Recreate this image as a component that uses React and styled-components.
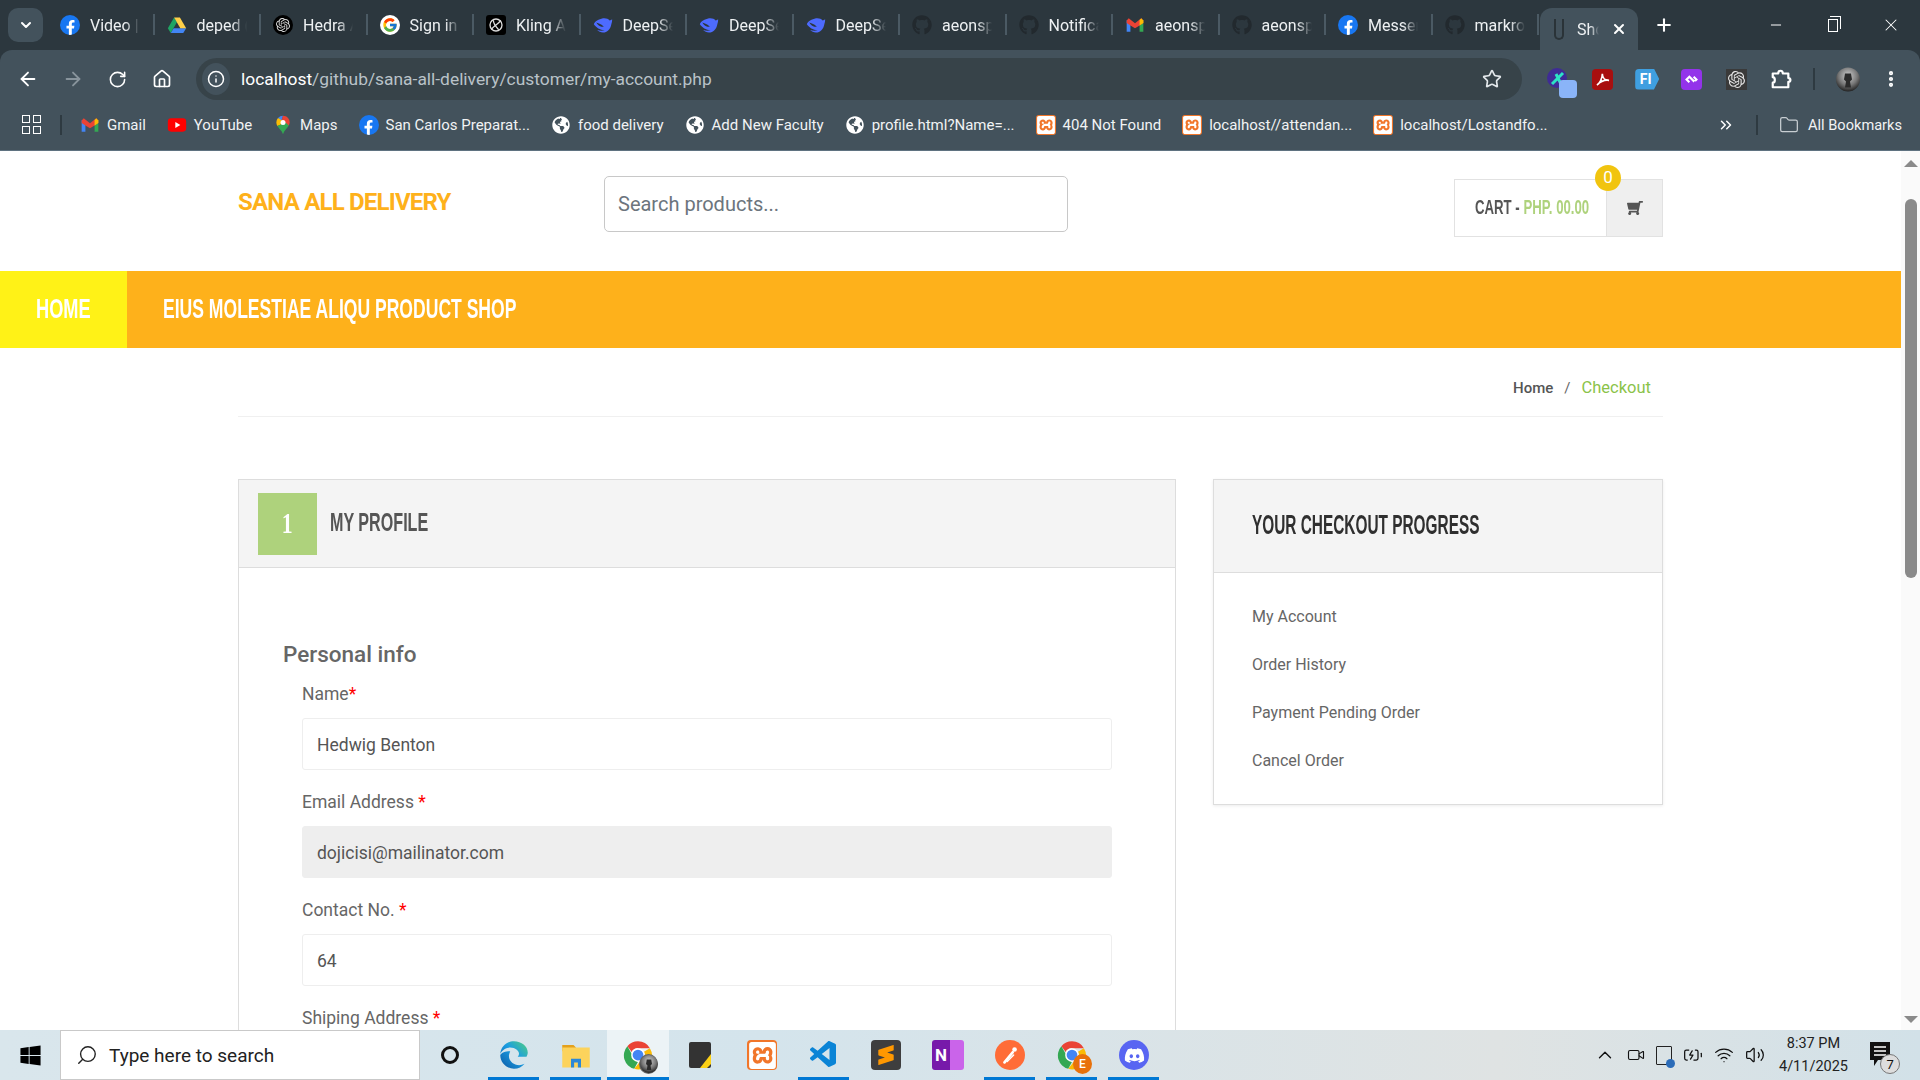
import styled, { createGlobalStyle } from "styled-components";
import {
  ArrowLeft,
  ArrowRight,
  BatteryCharging,
  ChevronDown,
  ChevronUp,
  ChevronsRight,
  EllipsisVertical,
  Folder,
  House,
  Info,
  Minus,
  Plus,
  RotateCw,
  Search,
  Star,
  Video,
  Volume2,
  Wifi,
  X,
} from "lucide-react";
import { FcGoogle } from "react-icons/fc";
import { FaDiscord, FaFacebookF, FaGithub, FaGlobeAmericas, FaShoppingCart, FaWindows } from "react-icons/fa";
import { SiOpenai, SiSublimetext, SiXampp } from "react-icons/si";
import { VscVscode } from "react-icons/vsc";

const GlobalStyle = createGlobalStyle`
  * {
    box-sizing: border-box;
  }

  html,
  body {
    margin: 0;
    height: 100%;
    overflow: hidden;
    background: #fff;
    font-family: Roboto, "Liberation Sans", sans-serif;
  }
`;

const Screen = styled.div`
  display: flex;
  flex-direction: column;
  width: 1920px;
  height: 1080px;
  overflow: hidden;
`;

const TabStrip = styled.div`
  display: flex;
  align-items: center;
  height: 50px;
  padding: 0 0 0 8px;
  background: #2c373e;
  color: #fff;
`;

const TabMenu = styled.div`
  display: flex;
  align-items: center;
  justify-content: center;
  flex: none;
  width: 35px;
  height: 34px;
  margin-right: 5px;
  border-radius: 10px;
  background: #43525c;
`;

const Tab = styled.div`
  position: relative;
  display: flex;
  align-items: center;
  flex: none;
  width: 106.5px;
  height: 50px;
  padding-left: 12px;

  &::after {
    content: "";
    position: absolute;
    right: 0;
    top: 14px;
    width: 2px;
    height: 21px;
    background: #4b5a64;
  }
`;

const TabIcon = styled.div`
  display: flex;
  align-items: center;
  justify-content: center;
  flex: none;
  width: 20px;
  height: 20px;
  margin-right: 10px;
`;

const TabLabel = styled.div`
  width: 50px;
  overflow: hidden;
  white-space: nowrap;
  font-size: 16px;
  color: #eef1f3;
  mask-image: linear-gradient(to right, #000 70%, transparent);
`;

const ActiveTab = styled.div`
  display: flex;
  align-items: center;
  flex: none;
  width: 98px;
  height: 42px;
  margin: 8px 0 0 1px;
  padding: 0 11px 0 14px;
  border-radius: 12px 12px 0 0;
  background: #43525c;
`;

const UploadGlyph = styled.div`
  flex: none;
  width: 10px;
  height: 21px;
  margin-right: 13px;
  border: 2px solid #2a3338;
  border-top: 0;
  border-radius: 0 0 6px 6px;
`;

const ActiveLabel = styled.div`
  width: 22px;
  margin-right: 12px;
  overflow: hidden;
  white-space: nowrap;
  font-size: 16px;
  color: #eef1f3;
  mask-image: linear-gradient(to right, #000 60%, transparent);
`;

const NewTab = styled.div`
  display: flex;
  margin-left: 16px;
`;

const WindowControls = styled.div`
  display: flex;
  align-items: center;
  justify-content: space-between;
  width: 133px;
  margin-left: auto;
  margin-right: 19px;
`;

const RestoreGlyph = styled.div`
  position: relative;
  width: 10px;
  height: 13px;
  border: 1.5px solid #fff;

  &::after {
    content: "";
    position: absolute;
    top: -4px;
    left: 1px;
    width: 10px;
    height: 12px;
    border: 1.5px solid #fff;
    border-left: 0;
    border-bottom: 0;
  }
`;

const ChromeTop = styled.div`
  background: #2c373e;
`;

const Toolbar = styled.div`
  display: flex;
  align-items: center;
  height: 50px;
  padding: 0 0 0 6px;
  border-radius: 12px 12px 0 0;
  background: #43525c;
  color: #fff;
`;

const NavButton = styled.div`
  display: flex;
  align-items: center;
  justify-content: center;
  flex: none;
  width: 44.5px;
  height: 42px;
  margin-top: 8px;
  color: ${(p) => (p.$off ? "#88949c" : "#fff")};
`;

const AddressBar = styled.div`
  display: flex;
  align-items: center;
  flex: none;
  width: 1326px;
  height: 42px;
  margin: 8px 0 0 12px;
  padding: 0 20px 0 6px;
  border-radius: 21px;
  background: #374349;
`;

const InfoDot = styled.div`
  display: flex;
  align-items: center;
  justify-content: center;
  flex: none;
  width: 28px;
  height: 32px;
  border-radius: 50%;
  background: #43525c;
`;

const Url = styled.div`
  flex: 1;
  margin-left: 11px;
  font-size: 17.4px;
  color: #fff;
`;

const UrlPath = styled.span`
  color: #b9c2c8;
`;

const Extensions = styled.div`
  display: flex;
  align-items: center;
  flex: 1;
  height: 42px;
  margin-top: 8px;
  padding-left: 24px;
`;

const ExtSlot = styled.div`
  display: flex;
  align-items: center;
  justify-content: center;
  flex: none;
  width: 24px;
  height: 24px;
  margin-right: 20.6px;
`;

const MenuSlot = styled.div`
  display: flex;
  margin-left: 1px;
`;

const OverlayBox = styled.div`
  position: relative;
  display: flex;
`;

const ExtSquare = styled.div`
  position: absolute;
  right: -8px;
  bottom: -8px;
  width: 18px;
  height: 18px;
  border-radius: 4px;
  background: #8ab4f8;
`;

const ExtTile = styled.div`
  display: flex;
  align-items: center;
  justify-content: center;
  flex: none;
  width: ${(p) => (p.$arrow ? "24px" : "21px")};
  height: 21px;
  padding-right: ${(p) => (p.$arrow ? "3px" : "0")};
  border-radius: ${(p) => (p.$square ? "0" : "4px")};
  background: ${(p) => p.$bg};
  clip-path: ${(p) => (p.$arrow ? "polygon(0 0, 78% 0, 100% 50%, 78% 100%, 0 100%)" : "none")};
`;

const ExtLetter = styled.span`
  font-size: 14px;
  font-weight: 700;
  color: #fff;
`;

const ToolbarDivider = styled.div`
  flex: none;
  width: 2px;
  height: 22px;
  margin: 0 21px 0 -1px;
  background: #2e3a41;
`;

const BookmarkBar = styled.div`
  display: flex;
  align-items: center;
  flex: none;
  height: 51px;
  padding: 0 0 1px 22px;
  background: #43525c;
  border-bottom: 1px solid #5f7280;
  color: #fff;
`;

const AppsGrid = styled.div`
  display: grid;
  grid-template-columns: 8px 8px;
  gap: 3px;
  flex: none;
  margin-right: 19px;
`;

const AppsCell = styled.div`
  width: 8px;
  height: 8px;
  border: 1.5px solid #fff;
`;

const BarDivider = styled.div`
  flex: none;
  width: 2px;
  height: 20px;
  background: #2e3a41;
`;

const BookmarkList = styled.div`
  display: flex;
  align-items: center;
  gap: 21px;
  margin-left: 18px;
`;

const Bookmark = styled.div`
  display: flex;
  align-items: center;
  gap: 7px;
  font-size: 15px;
  white-space: nowrap;
  color: #f1f3f4;
`;

const BookmarkIcon = styled.span`
  display: flex;
  align-items: center;
  justify-content: center;
  flex: none;
  width: 20px;
  height: 20px;
`;

const BookmarkEnd = styled.div`
  display: flex;
  align-items: center;
  gap: 21px;
  margin-left: auto;
  padding-right: 18px;
`;

const AllBookmarks = styled.div`
  display: flex;
  align-items: center;
  gap: 9px;
  font-size: 14.6px;
  color: #f1f3f4;
`;

const FacebookDisc = styled.div`
  display: flex;
  align-items: flex-end;
  justify-content: center;
  overflow: hidden;
  width: 20px;
  height: 20px;
  border-radius: 50%;
  background: #1877f2;
`;

const GoogleDisc = styled.div`
  display: flex;
  align-items: center;
  justify-content: center;
  width: 20px;
  height: 20px;
  border-radius: 50%;
  background: #fff;
`;

const HedraDisc = styled.div`
  display: flex;
  align-items: center;
  justify-content: center;
  width: 20px;
  height: 20px;
  border-radius: 50%;
  background: #000;
`;

const KlingBox = styled.div`
  display: flex;
  align-items: center;
  justify-content: center;
  width: 20px;
  height: 20px;
  border-radius: 3px;
  background: #000;
`;

const XamppTile = styled.div`
  display: flex;
  align-items: center;
  justify-content: center;
  width: 20px;
  height: 20px;
  border-radius: 3px;
  background: #f1762a;
`;

const Viewport = styled.div`
  display: flex;
  flex: 1;
  min-height: 0;
`;

const Page = styled.div`
  flex: 1;
  min-width: 0;
  overflow: hidden;
  background: #fff;
  color: #666;
`;

const Header = styled.header`
  display: flex;
  align-items: flex-start;
  width: 1425px;
  height: 120px;
  margin-left: 238px;
`;

const Logo = styled.div`
  flex: none;
  width: 366px;
  margin-top: 36px;
  font-size: 24px;
  line-height: 30px;
  font-weight: 700;
  letter-spacing: -0.8px;
  color: #feb11b;
`;

const SearchInput = styled.input`
  flex: none;
  width: 464px;
  height: 56px;
  margin-top: 25px;
  padding: 0 13px;
  border: 1px solid #c8c8c8;
  border-radius: 5px;
  outline: 0;
  font: 20px Roboto, sans-serif;
  color: #495057;

  &::placeholder {
    color: #6c757d;
    opacity: 1;
  }
`;

const Cart = styled.div`
  position: relative;
  display: flex;
  flex: none;
  width: 209px;
  height: 58px;
  margin: 28px 0 0 auto;
  border: 1px solid #e2e2e2;
`;

const CartTotal = styled.div`
  display: flex;
  align-items: center;
  flex: none;
  width: 152px;
  padding-left: 20px;
  border-right: 1px solid #e2e2e2;
  color: #555;
`;

const CartPrice = styled.span`
  color: #aed27c;
`;

const CartIcon = styled.div`
  display: flex;
  align-items: center;
  justify-content: center;
  flex: 1;
  background: #efefef;
`;

const CartGlyph = styled(FaShoppingCart)`
  transform: scaleX(-1);
`;

const CartBadge = styled.div`
  position: absolute;
  top: -15px;
  left: 140px;
  display: flex;
  align-items: center;
  justify-content: center;
  width: 26px;
  height: 26px;
  padding-bottom: 3px;
  border-radius: 50%;
  background: #f1c40f;
  font-size: 17px;
  color: #fff;
`;

const Condensed = styled.span`
  display: inline-block;
  flex: none;
  margin-top: -2px;
  font-family: "Liberation Sans", sans-serif;
  font-size: ${(p) => p.$size}px;
  font-weight: 700;
  white-space: nowrap;
  transform: scaleX(${(p) => p.$scale});
  transform-origin: left center;
`;

const NavBar = styled.nav`
  display: flex;
  align-items: stretch;
  height: 77px;
  background: #feb11b;
  color: #fff;
`;

const NavHome = styled.div`
  display: flex;
  align-items: center;
  flex: none;
  width: 127px;
  padding-left: 36px;
  background: #fff217;
`;

const NavTitle = styled.div`
  display: flex;
  align-items: center;
  flex: 1;
  padding-left: 36px;
`;

const Container = styled.div`
  width: 1425px;
  margin-left: 238px;
`;

const Breadcrumb = styled.div`
  display: flex;
  align-items: center;
  justify-content: flex-end;
  height: 69px;
  padding: 16px 12px 5px 0;
  border-bottom: 1px solid #f0f0f0;
  font-size: 16.5px;
`;

const CrumbLink = styled.span`
  font-weight: 500;
  font-size: 15px;
  color: #555;
`;

const CrumbSlash = styled.span`
  margin: 0 11px;
  font-size: 15px;
  color: #666;
`;

const CrumbCurrent = styled.span`
  color: #8bc34a;
`;

const Columns = styled.div`
  display: grid;
  grid-template-columns: 938px 450px;
  column-gap: 37px;
  align-items: start;
  margin-top: 62px;
`;

const Panel = styled.section`
  border: 1px solid #ddd;
`;

const ProfileHead = styled.div`
  display: flex;
  align-items: center;
  gap: 13px;
  height: 88px;
  padding-left: 19px;
  border-bottom: 1px solid #ddd;
  background: #f4f4f4;
  color: #555;
`;

const StepBadge = styled.div`
  display: flex;
  align-items: center;
  justify-content: center;
  flex: none;
  width: 59px;
  height: 62px;
  background: #aed27c;
  font-family: "Liberation Serif", serif;
  font-size: 29px;
  font-weight: 700;
  color: #fff;
`;

const StepDigit = styled.span`
  display: inline-block;
  transform: scaleX(0.75);
`;

const ProfileBody = styled.div`
  padding: 73px 63px 40px 44px;
`;

const SectionTitle = styled.h3`
  margin: 0 0 15px;
  font-size: 22.5px;
  line-height: 26px;
  font-weight: 500;
  color: #666;
`;

const Field = styled.div`
  margin: 0 0 20px 19px;
`;

const FieldLabel = styled.label`
  display: block;
  margin-bottom: 13px;
  padding-top: 1px;
  font-size: 17.5px;
  line-height: 22px;
  color: #666;
`;

const Required = styled.span`
  color: #f00;
`;

const FieldInput = styled.input`
  display: block;
  width: 100%;
  height: 52px;
  padding: 2px 14px 0;
  border: 1px solid #eee;
  border-radius: 3px;
  outline: 0;
  background: ${(p) => (p.$disabled ? "#eee" : "#fff")};
  font: 17.5px Roboto, sans-serif;
  color: #555;
`;

const Sidebar = styled.aside`
  border: 1px solid #ddd;
  box-shadow: 0 1px 3px rgba(0, 0, 0, 0.08);
`;

const SideHead = styled.div`
  display: flex;
  align-items: center;
  height: 93px;
  padding-left: 38px;
  border-bottom: 1px solid #ddd;
  background: #f4f4f4;
  color: #2f2f2f;
`;

const SideList = styled.ul`
  margin: 0;
  padding: 20px 0 19px 38px;
  list-style: none;
`;

const SideItem = styled.li`
  font-size: 16px;
  line-height: 48px;
  color: #666;
`;

const Scrollbar = styled.div`
  display: flex;
  flex-direction: column;
  align-items: center;
  flex: none;
  width: 19px;
  background: #fafafa;
`;

const ScrollArrow = styled.div`
  flex: none;
  width: 0;
  height: 0;
  margin: ${(p) => (p.$down ? "auto 0 7px" : "9px 0 0")};
  border-left: 7px solid transparent;
  border-right: 7px solid transparent;
  border-${(p) => (p.$down ? "top" : "bottom")}: 7px solid #8a8a8a;
`;

const ScrollThumb = styled.div`
  flex: none;
  width: 12px;
  height: 379px;
  margin-top: 32px;
  border-radius: 6px;
  background: #8a8a8a;
`;

const Taskbar = styled.footer`
  display: flex;
  align-items: center;
  flex: none;
  height: 50px;
  background: linear-gradient(90deg, #d9e6ec 0%, #d4e4ec 40%, #dfe3e3 78%, #d2e1e8 100%);
  color: #111;
`;

const StartButton = styled.div`
  display: flex;
  align-items: center;
  justify-content: center;
  flex: none;
  width: 60px;
  height: 50px;
`;

const TaskSearch = styled.div`
  display: flex;
  align-items: center;
  gap: 11px;
  flex: none;
  width: 360px;
  height: 50px;
  padding-left: 15px;
  border: 1px solid #c9c9c9;
  background: #fff;
  font-size: 19px;
  color: #222;
`;

const MirroredSearch = styled(Search)`
  transform: scaleX(-1);
`;

const CortanaSlot = styled.div`
  display: flex;
  align-items: center;
  justify-content: center;
  flex: none;
  width: 60px;
  height: 50px;
`;

const CortanaRing = styled.div`
  width: 18px;
  height: 18px;
  border: 3px solid #111;
  border-radius: 50%;
`;

const Dock = styled.div`
  display: flex;
  flex: none;
  margin-left: 3px;
`;

const DockItem = styled.div`
  position: relative;
  display: flex;
  align-items: center;
  justify-content: center;
  width: 62px;
  height: 50px;
  background: ${(p) => (p.$active ? "rgba(255, 255, 255, 0.55)" : "transparent")};

  &::after {
    content: "";
    display: ${(p) => (p.$running ? "block" : "none")};
    position: absolute;
    bottom: 0;
    left: ${(p) => (p.$active ? "0" : "5px")};
    right: ${(p) => (p.$active ? "0" : "6px")};
    height: 3px;
    background: #0078d4;
  }
`;

const ChromeBadge = styled.div`
  position: absolute;
  right: -5px;
  bottom: -4px;
  display: flex;
  align-items: center;
  justify-content: center;
  overflow: hidden;
  width: 19px;
  height: 20px;
  border-radius: 50%;
  background: ${(p) => p.$bg};
  font-size: 12px;
  font-weight: 500;
  color: #fff;
`;

const AppTile = styled.div`
  display: flex;
  align-items: center;
  justify-content: center;
  width: 30px;
  height: 30px;
  border-radius: ${(p) => (p.$round ? "50%" : "4px")};
  background: ${(p) => p.$bg};
`;

const OneNoteTile = styled.div`
  display: flex;
  align-items: center;
  width: 32px;
  height: 30px;
  border-radius: 3px;
  background: linear-gradient(90deg, #7719aa 55%, #ca64ea 55%);
`;

const OneNoteLetter = styled.span`
  width: 18px;
  text-align: center;
  font-size: 17px;
  font-weight: 700;
  color: #fff;
`;

const Tray = styled.div`
  display: flex;
  align-items: center;
  gap: 11px;
  margin-left: auto;
`;

const TrayMonitor = styled.div`
  position: relative;
  width: 16px;
  height: 19px;
  border: 1.5px solid #222;
  border-radius: 1px;

  &::after {
    content: "";
    position: absolute;
    right: -4px;
    bottom: -4px;
    width: 9px;
    height: 9px;
    border-radius: 50%;
    background: #2b6cb8;
  }
`;

const Clock = styled.div`
  display: flex;
  flex-direction: column;
  align-items: center;
  gap: 6px;
  flex: none;
  width: 84px;
  margin-left: 6.5px;
  font-size: 14.5px;
  line-height: 17px;
  color: #222;
`;

const NoticeSlot = styled.div`
  display: flex;
  align-items: center;
  justify-content: center;
  flex: none;
  width: 64.5px;
  padding-right: 13px;
`;

const NoticeCount = styled.div`
  position: absolute;
  right: -8px;
  bottom: -6px;
  display: flex;
  align-items: center;
  justify-content: center;
  width: 20px;
  height: 20px;
  border: 1px solid #777;
  border-radius: 50%;
  background: #ddd;
  font-size: 13px;
  color: #111;
`;

const Facebook = () => (
  <FacebookDisc>
    <FaFacebookF size={15} color="#fff" />
  </FacebookDisc>
);

const Google = () => (
  <GoogleDisc>
    <FcGoogle size={16} />
  </GoogleDisc>
);

const Hedra = () => (
  <HedraDisc>
    <SiOpenai size={14} color="#ddd" />
  </HedraDisc>
);

const Kling = () => (
  <KlingBox>
    <svg width="16" height="16" viewBox="0 0 24 24" fill="none" stroke="#ddd" strokeWidth="2">
      <circle cx="12" cy="12" r="9" />
      <path d="M5 19C9 12 15 12 19 5M8 5c0 6 4 10 8 14" />
    </svg>
  </KlingBox>
);

const Drive = () => (
  <svg width="20" height="20" viewBox="0 0 24 24">
    <path d="M8.5 3 1 16l3.5 5.5L12 8.5z" fill="#1fa463" />
    <path d="M4.5 21.5h15L23 16H8z" fill="#4285f4" />
    <path d="M8.5 3h7L23 16h-7z" fill="#ffcf48" />
  </svg>
);

const Gmail = () => (
  <svg width="20" height="20" viewBox="0 0 24 24">
    <path d="M2 6v14h4.5V9z" fill="#4285f4" />
    <path d="M22 6v14h-4.5V9z" fill="#34a853" />
    <path d="M2 6.5 4.5 4 12 10l7.5-6L22 6.5v3l-4.5 3L12 16l-5.5-3.5L2 9.5z" fill="#ea4335" />
    <path d="M19.5 4 22 6.5v3l-4.5 3V6z" fill="#fbbc04" />
  </svg>
);

const YouTube = () => (
  <svg width="20" height="20" viewBox="0 0 24 24">
    <rect x="1" y="4" width="22" height="16" rx="4" fill="#f00" />
    <path d="m10 8.5 6 3.5-6 3.5z" fill="#fff" />
  </svg>
);

const Maps = () => (
  <svg width="20" height="22" viewBox="0 0 24 24">
    <path d="M12 1a8 8 0 0 0-6 2.7L10 8z" fill="#4285f4" />
    <path d="M12 1c4.5 0 8 3.5 8 8 0 1.4-.4 2.5-1 3.5L10 8z" fill="#ea4335" />
    <path d="M6 3.7A8 8 0 0 0 4 9c0 1.5.5 3 1.2 4.3L14 9.5 10 6z" fill="#fbbc04" />
    <path d="M5.2 13.3C7 16.5 10.5 18.5 12 23c1.5-5 5-7 7-10.5L15 9z" fill="#34a853" />
    <circle cx="12" cy="9" r="3" fill="#fff" />
  </svg>
);

const Xampp = () => (
  <XamppTile>
    <SiXampp size={18} color="#fff" />
  </XamppTile>
);

const Globe = () => <FaGlobeAmericas size={18} color="#fff" />;

const Whale = () => (
  <svg width="20" height="20" viewBox="0 0 24 24">
    <path
      d="M23 5c-1 .7-1.7 1.2-3 1.5C18.5 4.5 15 3.500 12 4 7 5 2 8 1 11c3 4 7 7 13 7-3 1.5-6 1-9 0 2 2 4 3 7 3 5 0 9-4 10-10 .8-2 1-4 1-6zM10 14C7 13 5 11 4 9c3 1 6 2 9 5-1 .3-2 .3-3 0z"
      fill="#4d6bfe"
    />
  </svg>
);

const Github = () => <FaGithub size={20} color="#22292e" />;

const ChromeLogo = ({ children }) => (
  <OverlayBox>
    <svg width="30" height="30" viewBox="0 0 24 24">
      <path d="M12 1a11 11 0 0 1 9.5 5.5H12a5.5 5.5 0 0 0-5 3L3.5 5A11 11 0 0 1 12 1z" fill="#ea4335" />
      <path d="M3.5 5 8 13a5.5 5.5 0 0 0 4 4.4L9 23A11 11 0 0 1 3.5 5z" fill="#34a853" />
      <path d="M21.5 6.5A11 11 0 0 1 9 23l4.5-5.6a5.5 5.5 0 0 0 3.3-8z" fill="#fbbc04" />
      <circle cx="12" cy="12" r="5.5" fill="#fff" />
      <circle cx="12" cy="12" r="4.3" fill="#4285f4" />
    </svg>
    {children}
  </OverlayBox>
);

const Avatar = ({ size = 24 }) => (
  <svg width={size} height={size} viewBox="0 0 24 24">
    <defs>
      <radialGradient id="avatarFill" cx="50%" cy="35%" r="65%">
        <stop offset="0" stopColor="#cfcfcf" />
        <stop offset="0.6" stopColor="#777" />
        <stop offset="1" stopColor="#222" />
      </radialGradient>
    </defs>
    <circle cx="12" cy="12" r="12" fill="url(#avatarFill)" />
    <path d="M9 6h6l1 6-2 2 1 6H9l1-6-2-2z" fill="#2b2b2b" />
  </svg>
);

const Edge = () => (
  <svg width="30" height="30" viewBox="0 0 24 24">
    <defs>
      <linearGradient id="edgeFill" x1="0" y1="1" x2="1" y2="0">
        <stop offset="0" stopColor="#0c59a4" />
        <stop offset="0.55" stopColor="#1b9de2" />
        <stop offset="1" stopColor="#52d17c" />
      </linearGradient>
    </defs>
    <path
      d="M12 1C6 1 1.5 5.5 1 11c1.5-3 5-5 8-5 4 0 7 2.5 7 5 0 1-.5 1.7-1 2.3h7c.5-1 1-2 1-3.3C23 5 18 1 12 1zM1 12c0 6 5 11 11 11 3.5 0 6.5-1.5 8.5-4-2 1-4 1.3-6 1-4-.7-7-4-6.5-8 .1-1 .5-2 1-3C5 9 2 10 1 12z"
      fill="url(#edgeFill)"
    />
  </svg>
);

const Explorer = () => (
  <svg width="30" height="30" viewBox="0 0 24 24">
    <path d="M1 4h9l2 2v3H1z" fill="#e4a11d" />
    <rect x="1" y="6" width="22" height="16" fill="#fcd35c" />
    <path d="M8 22v-7h8v7h-2.5v-4h-3v4z" fill="#2b88d8" />
  </svg>
);

const Sticky = () => (
  <svg width="26" height="28" viewBox="0 0 24 28">
    <rect x="1" y="1" width="22" height="26" rx="2" fill="#333" />
    <path d="M12 27 23 13v10l-4 4z" fill="#fcd116" />
  </svg>
);

const Postman = () => (
  <AppTile $round $bg="#ff6c37">
    <svg width="22" height="22" viewBox="0 0 24 24" fill="none" stroke="#fff" strokeLinecap="round">
      <path d="M6 20 15 9" strokeWidth="3" />
      <path d="M9 19l7-7" strokeWidth="1.5" />
      <circle cx="17" cy="6" r="2.5" fill="#fff" stroke="none" />
    </svg>
  </AppTile>
);

const OneNote = () => (
  <OneNoteTile>
    <OneNoteLetter>N</OneNoteLetter>
  </OneNoteTile>
);

const NoticeIcon = () => (
  <OverlayBox>
    <svg width="22" height="26" viewBox="0 0 22 26">
      <path d="M0 0h20v18H8l-4 6v-6H0z" fill="#111" />
      <path d="M4 5h12M4 9h12M4 13h12" stroke="#fff" strokeWidth="1.5" />
    </svg>
    <NoticeCount>7</NoticeCount>
  </OverlayBox>
);

const tabs = [
  { label: "Video |", icon: <Facebook /> },
  { label: "deped (", icon: <Drive /> },
  { label: "Hedra AI", icon: <Hedra /> },
  { label: "Sign in", icon: <Google /> },
  { label: "Kling AI", icon: <Kling /> },
  { label: "DeepSeek", icon: <Whale /> },
  { label: "DeepSeek", icon: <Whale /> },
  { label: "DeepSeek", icon: <Whale /> },
  { label: "aeonsp", icon: <Github /> },
  { label: "Notifica", icon: <Github /> },
  { label: "aeonsp", icon: <Gmail /> },
  { label: "aeonsp", icon: <Github /> },
  { label: "Messen", icon: <Facebook /> },
  { label: "markro", icon: <Github /> },
];

const bookmarks = [
  { label: "Gmail", icon: <Gmail /> },
  { label: "YouTube", icon: <YouTube /> },
  { label: "Maps", icon: <Maps /> },
  { label: "San Carlos Preparat...", icon: <Facebook /> },
  { label: "food delivery", icon: <Globe /> },
  { label: "Add New Faculty", icon: <Globe /> },
  { label: "profile.html?Name=...", icon: <Globe /> },
  { label: "404 Not Found", icon: <Xampp /> },
  { label: "localhost//attendan...", icon: <Xampp /> },
  { label: "localhost/Lostandfo...", icon: <Xampp /> },
];

const dockApps = [
  { key: "edge", icon: <Edge />, running: true },
  { key: "explorer", icon: <Explorer />, running: true },
  {
    key: "chrome",
    active: true,
    running: true,
    icon: (
      <ChromeLogo>
        <ChromeBadge $bg="#666">
          <Avatar size={18} />
        </ChromeBadge>
      </ChromeLogo>
    ),
  },
  { key: "sticky", icon: <Sticky /> },
  {
    key: "xampp",
    icon: (
      <AppTile $bg="#f1762a">
        <SiXampp size={27} color="#fff" />
      </AppTile>
    ),
  },
  { key: "vscode", icon: <VscVscode size={32} color="#0a84d6" />, running: true },
  {
    key: "sublime",
    icon: (
      <AppTile $bg="#3e3e3e">
        <SiSublimetext size={20} color="#ff9800" />
      </AppTile>
    ),
  },
  { key: "onenote", icon: <OneNote /> },
  { key: "postman", running: true, icon: <Postman /> },
  {
    key: "chrome-e",
    running: true,
    icon: (
      <ChromeLogo>
        <ChromeBadge $bg="#e8710a">E</ChromeBadge>
      </ChromeLogo>
    ),
  },
  {
    key: "discord",
    running: true,
    icon: (
      <AppTile $round $bg="#5865f2">
        <FaDiscord size={21} color="#fff" />
      </AppTile>
    ),
  },
];

const fields = [
  { label: "Name", value: "Hedwig Benton", tight: true },
  { label: "Email Address", value: "dojicisi@mailinator.com", disabled: true },
  { label: "Contact No.", value: "64" },
  { label: "Shiping Address", value: "" },
];

const progress = ["My Account", "Order History", "Payment Pending Order", "Cancel Order"];

function App() {
  return (
    <>
      <GlobalStyle />
      <Screen>
        <TabStrip>
          <TabMenu>
            <ChevronDown size={16} strokeWidth={3} />
          </TabMenu>
          {tabs.map((tab, i) => (
            <Tab key={i}>
              <TabIcon>{tab.icon}</TabIcon>
              <TabLabel>{tab.label}</TabLabel>
            </Tab>
          ))}
          <ActiveTab>
            <UploadGlyph />
            <ActiveLabel>Shop</ActiveLabel>
            <X size={16} strokeWidth={3} color="#fff" />
          </ActiveTab>
          <NewTab>
            <Plus size={20} strokeWidth={2.5} />
          </NewTab>
          <WindowControls>
            <Minus size={16} strokeWidth={1.5} />
            <RestoreGlyph />
            <X size={20} strokeWidth={1.25} />
          </WindowControls>
        </TabStrip>

        <ChromeTop>
          <Toolbar>
            <NavButton>
              <ArrowLeft size={22} />
            </NavButton>
            <NavButton $off>
              <ArrowRight size={22} />
            </NavButton>
            <NavButton>
              <RotateCw size={19} />
            </NavButton>
            <NavButton>
              <House size={20} />
            </NavButton>
            <AddressBar>
              <InfoDot>
                <Info size={18} />
              </InfoDot>
              <Url>
                localhost<UrlPath>/github/sana-all-delivery/customer/my-account.php</UrlPath>
              </Url>
              <Star size={20} color="#e3e8eb" />
            </AddressBar>
            <Extensions>
              <ExtSlot>
                <OverlayBox>
                  <svg width="22" height="22" viewBox="0 0 22 22">
                    <circle cx="10" cy="10" r="10" fill="#3f2b96" />
                    <path d="M5 16 16 5M9 6l5 10" stroke="#2de2c5" strokeWidth="3" />
                  </svg>
                  <ExtSquare />
                </OverlayBox>
              </ExtSlot>
              <ExtSlot>
                <ExtTile $bg="#a80f0f">
                  <svg width="16" height="16" viewBox="0 0 24 24" fill="none" stroke="#fff" strokeWidth="2.5">
                    <path d="M3 21c4-2 8-10 8-17 0 6 4 10 10 10-6-1-12 1-18 7z" />
                  </svg>
                </ExtTile>
              </ExtSlot>
              <ExtSlot>
                <ExtTile $bg="#3f9fe0" $arrow>
                  <ExtLetter>FI</ExtLetter>
                </ExtTile>
              </ExtSlot>
              <ExtSlot>
                <ExtTile $bg="#9333ea">
                  <svg width="17" height="17" viewBox="0 0 24 24" fill="none" stroke="#fff" strokeWidth="3">
                    <path d="m9 16-4-4 4-4 7 7M15 8l4 4-2 2" />
                  </svg>
                </ExtTile>
              </ExtSlot>
              <ExtSlot>
                <ExtTile $bg="#3a3a3a" $square>
                  <SiOpenai size={17} color="#e6e6e6" />
                </ExtTile>
              </ExtSlot>
              <ExtSlot>
                <svg width="22" height="22" viewBox="0 0 24 24" fill="none" stroke="#fff" strokeWidth="2.4">
                  <path d="M3 6h6c0-4 5-4 5 0h6v5c3 0 3 4 0 4v6H3v-5c3 0 3-6 0-6z" strokeLinejoin="round" />
                </svg>
              </ExtSlot>
              <ToolbarDivider />
              <ExtSlot>
                <Avatar size={25} />
              </ExtSlot>
              <MenuSlot>
                <EllipsisVertical size={20} strokeWidth={3} />
              </MenuSlot>
            </Extensions>
          </Toolbar>
        </ChromeTop>

        <BookmarkBar>
          <AppsGrid>
            <AppsCell />
            <AppsCell />
            <AppsCell />
            <AppsCell />
          </AppsGrid>
          <BarDivider />
          <BookmarkList>
            {bookmarks.map((item) => (
              <Bookmark key={item.label}>
                <BookmarkIcon>{item.icon}</BookmarkIcon>
                {item.label}
              </Bookmark>
            ))}
          </BookmarkList>
          <BookmarkEnd>
            <ChevronsRight size={18} />
            <BarDivider />
            <AllBookmarks>
              <Folder size={20} strokeWidth={1.5} color="#c8ced2" />
              All Bookmarks
            </AllBookmarks>
          </BookmarkEnd>
        </BookmarkBar>

        <Viewport>
          <Page>
            <Header>
              <Logo>SANA ALL DELIVERY</Logo>
              <SearchInput placeholder="Search products..." />
              <Cart>
                <CartTotal>
                  <Condensed $size={20} $scale={0.66}>
                    CART - <CartPrice>PHP. 00.00</CartPrice>
                  </Condensed>
                </CartTotal>
                <CartIcon>
                  <CartGlyph size={16} color="#555" />
                </CartIcon>
                <CartBadge>0</CartBadge>
              </Cart>
            </Header>

            <NavBar>
              <NavHome>
                <Condensed $size={28} $scale={0.65}>HOME</Condensed>
              </NavHome>
              <NavTitle>
                <Condensed $size={28} $scale={0.627}>EIUS MOLESTIAE ALIQU PRODUCT SHOP</Condensed>
              </NavTitle>
            </NavBar>

            <Container>
              <Breadcrumb>
                <CrumbLink>Home</CrumbLink>
                <CrumbSlash>/</CrumbSlash>
                <CrumbCurrent>Checkout</CrumbCurrent>
              </Breadcrumb>

              <Columns>
                <Panel>
                  <ProfileHead>
                    <StepBadge>
                      <StepDigit>1</StepDigit>
                    </StepBadge>
                    <Condensed $size={26} $scale={0.62}>MY PROFILE</Condensed>
                  </ProfileHead>
                  <ProfileBody>
                    <SectionTitle>Personal info</SectionTitle>
                    {fields.map((field) => (
                      <Field key={field.label}>
                        <FieldLabel>
                          {field.label}
                          {!field.tight && " "}
                          <Required>*</Required>
                        </FieldLabel>
                        <FieldInput defaultValue={field.value} readOnly $disabled={field.disabled} />
                      </Field>
                    ))}
                  </ProfileBody>
                </Panel>

                <Sidebar>
                  <SideHead>
                    <Condensed $size={27} $scale={0.57}>YOUR CHECKOUT PROGRESS</Condensed>
                  </SideHead>
                  <SideList>
                    {progress.map((item) => (
                      <SideItem key={item}>{item}</SideItem>
                    ))}
                  </SideList>
                </Sidebar>
              </Columns>
            </Container>
          </Page>

          <Scrollbar>
            <ScrollArrow />
            <ScrollThumb />
            <ScrollArrow $down />
          </Scrollbar>
        </Viewport>

        <Taskbar>
          <StartButton>
            <FaWindows size={23} color="#000" />
          </StartButton>
          <TaskSearch>
            <MirroredSearch size={22} strokeWidth={1.5} />
            Type here to search
          </TaskSearch>
          <CortanaSlot>
            <CortanaRing />
          </CortanaSlot>
          <Dock>
            {dockApps.map((app) => (
              <DockItem key={app.key} $active={app.active} $running={app.running}>
                {app.icon}
              </DockItem>
            ))}
          </Dock>
          <Tray>
            <ChevronUp size={22} strokeWidth={1.5} />
            <Video size={18} strokeWidth={1.5} />
            <TrayMonitor />
            <BatteryCharging size={20} strokeWidth={1.5} />
            <Wifi size={20} strokeWidth={1.5} />
            <Volume2 size={20} strokeWidth={1.5} />
          </Tray>
          <Clock>
            <span>8:37 PM</span>
            <span>4/11/2025</span>
          </Clock>
          <NoticeSlot>
            <NoticeIcon />
          </NoticeSlot>
        </Taskbar>
      </Screen>
    </>
  );
}

export default App;
